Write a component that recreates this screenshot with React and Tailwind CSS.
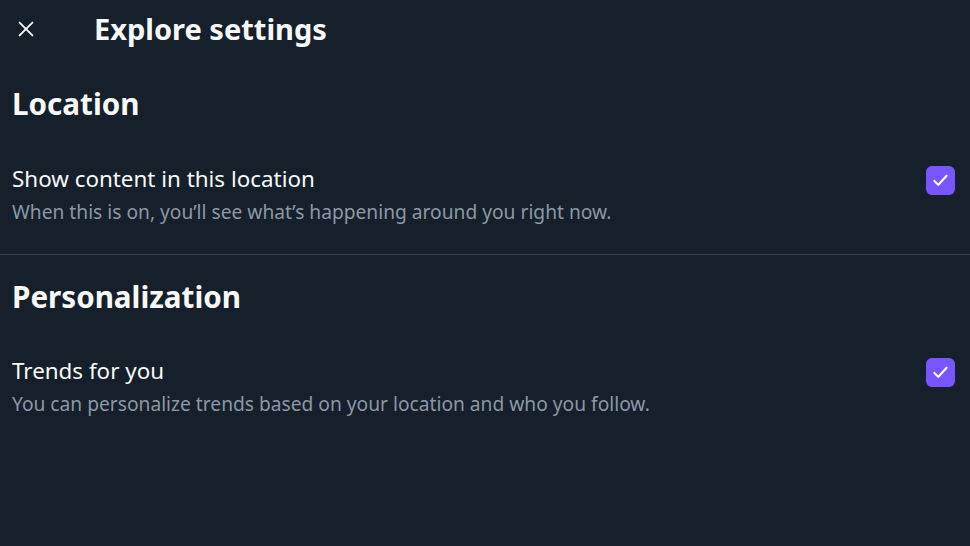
import React, { useState } from 'react';

const Check = ({ checked, onChange }) => (
    <button
        onClick={onChange}
        className={`w-[29px] h-[29px] rounded-[6px] flex items-center justify-center shrink-0 ${checked ? 'bg-[#7856ff]' : 'border-2 border-[#8b98a5]'}`}
    >
        {checked && (
            <svg viewBox="0 0 24 24" className="w-[21px] h-[21px]" fill="none" stroke="white" strokeWidth="2.4" strokeLinecap="round" strokeLinejoin="round">
                <path d="M5 12.5l4.5 4.5L19 6.5" />
            </svg>
        )}
    </button>
);

const SettingRow = ({ title, desc, checked, onChange }) => (
    <div className="flex items-start justify-between pl-3 pr-[15px] pt-[16px] pb-[29px]">
        <div className="flex flex-col">
            <span className="text-[22.4px] leading-[30px] text-[#f7f9f9]">{title}</span>
            <span className="text-[19.2px] leading-[26px] text-[#8b98a5] mt-[5px]">{desc}</span>
        </div>
        <div className="pt-[2px]">
            <Check checked={checked} onChange={onChange} />
        </div>
    </div>
);

const App = () => {
    const [location, setLocation] = useState(true);
    const [trends, setTrends] = useState(true);

    return (
        <div className="min-h-screen bg-[#15202b] text-[#f7f9f9]" style={{ fontFamily: '"Noto Sans", "Open Sans", sans-serif' }}>
            {/* Header */}
            <div className="h-[57px] flex items-center">
                <button className="w-[52px] h-[53px] flex items-center justify-center">
                    <svg viewBox="0 0 24 24" className="w-[22px] h-[22px]" fill="none" stroke="#f7f9f9" strokeWidth="2" strokeLinecap="round">
                        <path d="M5 5l14 14M19 5L5 19" />
                    </svg>
                </button>
                <h1 className="ml-[42px] text-[29px] font-bold leading-none">Explore settings</h1>
            </div>

            {/* Location */}
            <div className="border-b border-[#38444d]">
                <h2 className="pl-3 pt-[27px] pb-[24px] text-[29.6px] font-bold leading-[40px]">Location</h2>
                <SettingRow
                    title="Show content in this location"
                    desc="When this is on, you’ll see what’s happening around you right now."
                    checked={location}
                    onChange={() => setLocation(!location)}
                />
            </div>

            {/* Personalization */}
            <div>
                <h2 className="pl-3 pt-[22px] pb-[23px] text-[29.6px] font-bold leading-[40px]">Personalization</h2>
                <SettingRow
                    title="Trends for you"
                    desc="You can personalize trends based on your location and who you follow."
                    checked={trends}
                    onChange={() => setTrends(!trends)}
                />
            </div>
        </div>
    );
};

export default App;
